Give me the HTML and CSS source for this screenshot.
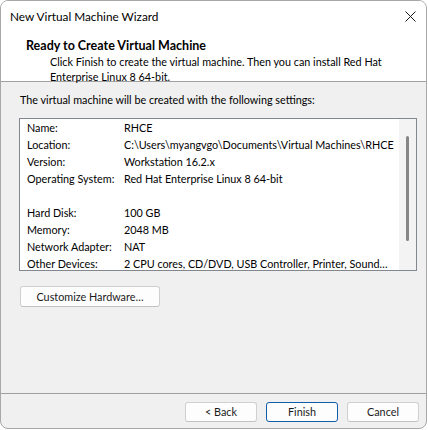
FILE: index.html
```html
<!DOCTYPE html>
<html>
<head>
<meta charset="utf-8">
<link rel="stylesheet" href="styles.css">
</head>
<body>
<div class="window">
  <div class="titlebar">
    <span class="title">New Virtual Machine Wizard</span>
    <span class="close">
      <svg width="11" height="11" viewBox="0 0 11 11"><path d="M0.5 0.5L10.5 10.5M10.5 0.5L0.5 10.5" stroke="#1a1a1a" stroke-width="1"/></svg>
    </span>
  </div>
  <div class="header">
    <div class="h-title">Ready to Create Virtual Machine</div>
    <div class="h-desc">Click Finish to create the virtual machine. Then you can install Red Hat Enterprise Linux 8 64-bit.</div>
  </div>
  <div class="content">
    <div class="intro">The virtual machine will be created with the following settings:</div>
    <div class="listbox">
      <div class="rows">
        <div class="row"><span class="k">Name:</span><span class="v">RHCE</span></div>
        <div class="row"><span class="k">Location:</span><span class="v">C:\Users\myangvgo\Documents\Virtual Machines\RHCE</span></div>
        <div class="row"><span class="k">Version:</span><span class="v">Workstation 16.2.x</span></div>
        <div class="row"><span class="k">Operating System:</span><span class="v">Red Hat Enterprise Linux 8 64-bit</span></div>
        <div class="row"><span class="k"></span><span class="v"></span></div>
        <div class="row"><span class="k">Hard Disk:</span><span class="v">100 GB</span></div>
        <div class="row"><span class="k">Memory:</span><span class="v">2048 MB</span></div>
        <div class="row"><span class="k">Network Adapter:</span><span class="v">NAT</span></div>
        <div class="row"><span class="k">Other Devices:</span><span class="v">2 CPU cores, CD/DVD, USB Controller, Printer, Sound…</span></div>
      </div>
      <div class="scroll"><div class="thumb"></div></div>
    </div>
    <div class="custom-wrap"><button class="btn custom">Customize Hardware…</button></div>
  </div>
  <div class="footer">
    <button class="btn">&lt; Back</button>
    <button class="btn primary">Finish</button>
    <button class="btn">Cancel</button>
  </div>
</div>
</body>
</html>
```
FILE: styles.css
```css
* { box-sizing: border-box; }
html, body { margin: 0; padding: 0; background: #ffffff; }
body {
  font-family: Lato, Roboto, "Liberation Sans", sans-serif;
  font-size: 10.8px;
  color: #000;
}
.window {
  width: 427px;
  height: 429px;
  border: 1px solid #a8a8a8;
  border-radius: 8px;
  overflow: hidden;
  background: #f0f0f0;
  display: flex;
  flex-direction: column;
}
.titlebar {
  height: 31px;
  background: #fff;
  display: flex;
  align-items: center;
  justify-content: space-between;
  padding: 0 10px 0 9px;
}
.title { font-size: 11.8px; }
.close { display: flex; width: 11px; height: 11px; }
.header {
  background: #fff;
  height: 50px;
  border-bottom: 1px solid #a0a0a0;
  padding: 6px 0 0 25px;
}
.h-title { font-weight: bold; font-size: 12.5px; line-height: 16px; }
.h-desc { padding-left: 24px; line-height: 15px; width: 370px; }
.content {
  flex: 1;
  padding: 10px 9px 0 18px;
  display: flex;
  flex-direction: column;
}
.intro { line-height: 16px; padding-left: 1px; }
.listbox {
  margin-top: 10px;
  height: 153px;
  border: 1px solid #828790;
  background: #fff;
  display: flex;
}
.rows { flex: 1; padding: 0 0 0 7px; }
.row { display: flex; height: 17px; line-height: 17px; white-space: nowrap; }
.row:last-child { height: 15px; line-height: 17px; }
.k { width: 97px; flex: none; }
.scroll {
  width: 17px;
  flex: none;
  background: #f3f3f3;
  display: flex;
  justify-content: center;
  padding-top: 17px;
}
.thumb { width: 3px; height: 105px; background: #868686; border-radius: 2px; }
.custom-wrap { margin-top: 15px; padding-left: 1px; }
.btn {
  font-family: inherit;
  font-size: 10.8px;
  height: 21px;
  border: 1px solid #d0d0d0;
  border-bottom-color: #c2c2c2;
  border-radius: 3px;
  background: #fdfdfd;
  color: #1a1a1a;
  padding: 0;
  line-height: 16px;
}
.custom { width: 140px; }
.footer {
  border-top: 1px solid #a0a0a0;
  height: 35px;
  display: flex;
  justify-content: flex-end;
  gap: 9px;
  padding: 8px 7px 0 0;
}
.footer .btn { width: 72px; height: 20px; }
.primary { border: 1px solid #0f5ca8; }
```
